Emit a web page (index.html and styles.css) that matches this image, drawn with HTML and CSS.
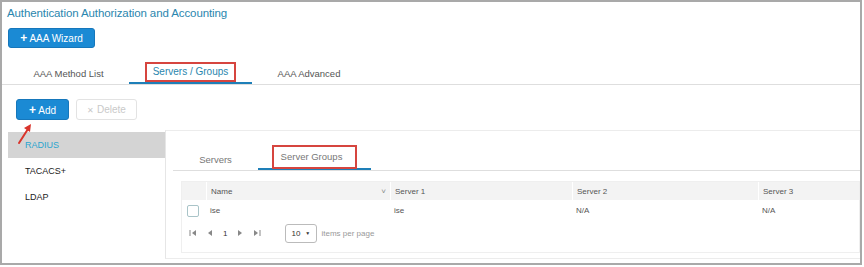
FILE: index.html
```html
<!DOCTYPE html>
<html lang="en">
<head>
    <meta charset="UTF-8">
    <title>Authentication Authorization and Accounting</title>
    <link rel="stylesheet" href="styles.css">
</head>
<body>
    <div class="frame">
        <h1 class="title">Authentication Authorization and Accounting</h1>
        <button class="btn btn-primary wizard"><span class="plus">+</span> AAA Wizard</button>

        <div class="tabs main-tabs">
            <div class="tab t1">AAA Method List</div>
            <div class="tab t2 active"><span class="mark">Servers / Groups</span></div>
            <div class="tab t3">AAA Advanced</div>
        </div>

        <div class="toolbar">
            <button class="btn btn-primary add"><span class="plus">+</span> Add</button>
            <button class="btn btn-disabled del"><span class="x">&#10005;</span> Delete</button>
        </div>

        <div class="content">
            <ul class="sidebar">
                <li class="selected">RADIUS</li>
                <li>TACACS+</li>
                <li>LDAP</li>
            </ul>
            <div class="panel">
                <div class="tabs sub-tabs">
                    <div class="tab s1">Servers</div>
                    <div class="tab s2 active"><span class="mark">Server Groups</span></div>
                </div>
                <div class="grid">
                    <div class="row head">
                        <div class="cell chk"></div>
                        <div class="cell c-name">Name <span class="sort">&#709;</span></div>
                        <div class="cell c-s1">Server 1</div>
                        <div class="cell c-s2">Server 2</div>
                        <div class="cell c-s3">Server 3</div>
                    </div>
                    <div class="row">
                        <div class="cell chk"><span class="box"></span></div>
                        <div class="cell c-name">ise</div>
                        <div class="cell c-s1">ise</div>
                        <div class="cell c-s2">N/A</div>
                        <div class="cell c-s3">N/A</div>
                    </div>
                    <div class="pager">
                        <svg width="8" height="8" viewBox="0 0 8 8"><rect x="0.5" y="1" width="1" height="6" fill="#888"/><path d="M7 1 L3 4 L7 7 Z" fill="#888"/></svg>
                        <svg class="pg-prev" width="6" height="8" viewBox="0 0 6 8"><path d="M5 1 L1 4 L5 7 Z" fill="#888"/></svg>
                        <span class="page">1</span>
                        <svg class="pg-next" width="6" height="8" viewBox="0 0 6 8"><path d="M1 1 L5 4 L1 7 Z" fill="#888"/></svg>
                        <svg width="8" height="8" viewBox="0 0 8 8"><path d="M1 1 L5 4 L1 7 Z" fill="#888"/><rect x="6.5" y="1" width="1" height="6" fill="#888"/></svg>
                        <span class="select">10 <span class="caret">&#9660;</span></span>
                        <span class="per">items per page</span>
                    </div>
                </div>
            </div>
        </div>

        <svg class="arrow" width="20" height="24" viewBox="0 0 20 24">
            <path d="M3 21 L12 7" stroke="#d9342b" stroke-width="2" stroke-linecap="round"/>
            <path d="M15 2 L8 6 L14 10 Z" fill="#d9342b"/>
        </svg>
    </div>
</body>
</html>
```

FILE: styles.css
```css
body {
    margin: 0;
    background-color: #fff;
    font-family: "Liberation Sans", Arial, sans-serif;
    color: #333;
}
.frame {
    position: relative;
    box-sizing: border-box;
    width: 862px;
    height: 265px;
    border: 2px solid #a9a9a9;
    background-color: #fff;
}
.title {
    margin: 0;
    padding: 5px 0 0 5px;
    font-size: 11.5px;
    font-weight: normal;
    color: #2a86ae;
    height: 15px;
    letter-spacing: -0.1px;
}
.btn {
    font-family: inherit;
    font-size: 10px;
    border-radius: 3px;
    padding: 0;
    cursor: pointer;
}
.btn-primary {
    background-color: #1b8ad4;
    border: 1px solid #1677bb;
    color: #fff;
}
.btn-disabled {
    background-color: #fff;
    border: 1px solid #e3e3e3;
    color: #c9c9c9;
}
.plus {
    font-weight: bold;
    font-size: 12px;
}
.x {
    font-size: 8px;
}
.wizard {
    display: block;
    margin: 6px 0 0 6px;
    width: 87px;
    height: 20px;
}
.tabs {
    display: flex;
    border-bottom: 1px solid #dedede;
}
.tab {
    display: flex;
    align-items: center;
    justify-content: center;
    font-size: 9.5px;
    color: #555;
    box-sizing: border-box;
}
.tab.active {
    border-bottom: 2px solid #1e7fb8;
    margin-bottom: -1px;
    color: #2a86ae;
}
.mark {
    border: 2px solid #d6453f;
    padding: 2px 5px;
}
.main-tabs {
    margin-top: 14px;
    height: 22px;
}
.main-tabs .tab { height: 22px; }
.main-tabs .t1 { width: 121px; margin-left: 6px; }
.main-tabs .t2 { width: 123px; }
.main-tabs .t2 .mark { padding: 2px 6px 3px; font-size: 10px; }
.main-tabs .t3 { width: 114px; }
.toolbar {
    display: flex;
    gap: 7px;
    margin: 14px 0 0 14px;
}
.add { width: 53px; height: 21px; }
.del { width: 61px; height: 21px; }
.content {
    display: flex;
    margin-top: 10px;
}
.sidebar {
    list-style: none;
    margin: 2px 0 0 6px;
    padding: 0;
    width: 157px;
}
.sidebar li {
    height: 26px;
    line-height: 26px;
    padding-left: 17px;
    font-size: 9px;
    color: #222;
}
.sidebar li.selected {
    background-color: #d4d4d4;
    color: #2aa5cf;
}
.panel {
    flex: 1;
    border-top: 1px solid #ececec;
    border-left: 1px solid #e6e6e6;
    height: 129px;
    box-sizing: border-box;
    padding: 14px 0 0 7px;
    border-bottom: 1px solid #ececec;
}
.sub-tabs { height: 25px; }
.sub-tabs .tab { height: 25px; color: #777; }
.sub-tabs .s1 { width: 85px; padding-top: 3px; }
.sub-tabs .s2 { width: 113px; align-items: flex-start; }
.sub-tabs .s2 .mark {
    line-height: 12px;
    padding: 4px 13px 4px 7px;
}
.grid {
    margin: 10px 0 0 8px;
    border: 1px solid #efefef;
    height: 72px;
    box-sizing: border-box;
    font-size: 8px;
    color: #555;
}
.row {
    display: flex;
    height: 21px;
    align-items: center;
}
.row.head {
    height: 18px;
    background-color: #f3f3f3;
}
.cell {
    box-sizing: border-box;
    padding-left: 4px;
    height: 100%;
    display: flex;
    align-items: center;
}
.head .cell + .cell { border-left: 1px solid #fff; }
.chk { width: 24px; padding-left: 5px; }
.c-name { width: 184px; position: relative; }
.c-s1 { width: 182px; }
.c-s2 { width: 186px; }
.c-s3 { flex: 1; }
.sort {
    position: absolute;
    right: 4px;
    color: #888;
    font-size: 8px;
}
.box {
    display: block;
    width: 10px;
    height: 10px;
    border: 1px solid #a9c4c8;
    border-radius: 2px;
}
.pager {
    display: flex;
    align-items: center;
    height: 24px;
    padding-left: 7px;
    gap: 10px;
}
.page { font-size: 8px; color: #333; }
.select {
    display: inline-flex;
    align-items: center;
    box-sizing: border-box;
    width: 32px;
    height: 19px;
    border: 1px solid #bbb;
    border-radius: 3px;
    padding-left: 5px;
    margin-left: 14px;
    font-size: 8px;
    color: #333;
}
.caret {
    font-size: 5px;
    margin-left: 5px;
}
.per {
    margin-left: -6px;
    color: #999;
    font-size: 8px;
}
.arrow {
    position: absolute;
    left: 14px;
    top: 120px;
}
```
